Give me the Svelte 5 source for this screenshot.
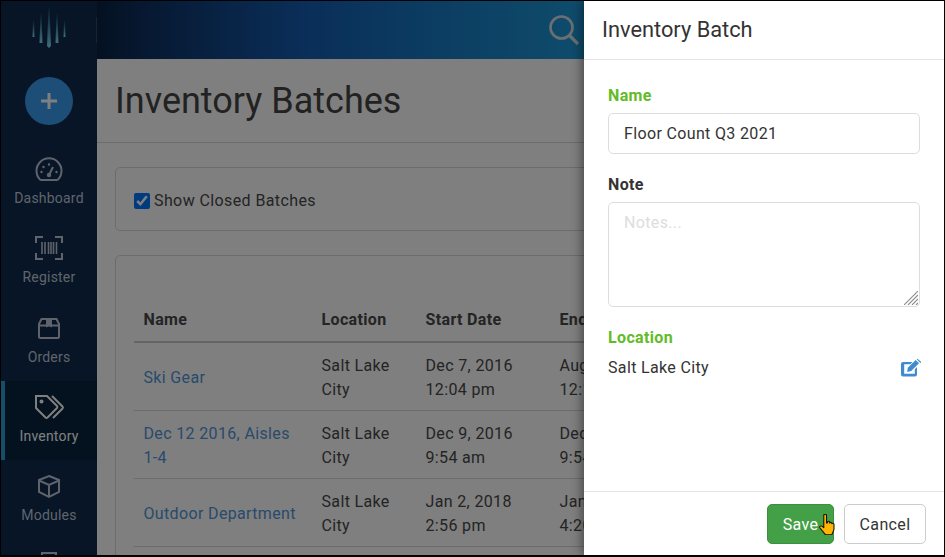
<script>
  // Sidebar entries, icon is picked by key in the markup below
  const navItems = [
    { key: 'dashboard', label: 'Dashboard' },
    { key: 'register', label: 'Register' },
    { key: 'orders', label: 'Orders' },
    { key: 'inventory', label: 'Inventory', active: true },
    { key: 'modules', label: 'Modules' },
    { key: 'more', label: '' }
  ];

  const batches = [
    { name: 'Ski Gear', location: 'Salt Lake City', start: ['Dec 7, 2016', '12:04 pm'], end: ['Aug 3, 2017', '12:10 pm'] },
    { name: 'Dec 12 2016, Aisles 1-4', location: 'Salt Lake City', start: ['Dec 9, 2016', '9:54 am'], end: ['Dec 9, 2016', '9:54 am'] },
    { name: 'Outdoor Department', location: 'Salt Lake City', start: ['Jan 2, 2018', '2:56 pm'], end: ['Jan 3, 2018', '4:20 pm'] }
  ];

  let batchName = 'Floor Count Q3 2021';
  let showClosed = true;
</script>

<div class="screen">
  <div class="shell">
    <aside class="sidebar">
      <div class="logo">
        <svg viewBox="0 0 34 42" width="34" height="42">
          <defs>
            <linearGradient id="bar" x1="0" y1="0" x2="0" y2="1">
              <stop offset="0" stop-color="#0f3d66" />
              <stop offset="1" stop-color="#7fdcf4" />
            </linearGradient>
          </defs>
          <path d="M1 14 L2 14 L2.500 30 L0.500 30 Z" fill="url(#bar)" />
          <path d="M8.500 7 L9.500 7 L10.500 36 L7.500 36 Z" fill="url(#bar)" />
          <path d="M16.500 0 L17.500 0 L19 39 L17 41 L15 39 Z" fill="url(#bar)" />
          <path d="M24.500 7 L25.500 7 L26.500 36 L23.500 36 Z" fill="url(#bar)" />
          <path d="M32 14 L33 14 L33.500 30 L31.500 30 Z" fill="url(#bar)" />
        </svg>
      </div>
      <div class="add-wrap">
        <button class="add" aria-label="Add">
          <svg viewBox="0 0 18 18" width="18" height="18">
            <path d="M9 1v16M1 9h16" stroke="currentColor" stroke-width="3" fill="none" />
          </svg>
        </button>
      </div>
      <nav>
        {#each navItems as item}
          <div class="nav-item" class:active={item.active}>
            <svg class="nav-icon" viewBox="0 0 32 28" width="32" height="28" fill="none" stroke="currentColor" stroke-width="2">
              {#if item.key === 'dashboard'}
                <path d="M7 24.500 a12.500 12.500 0 1 1 18 0 a2 2 0 0 1 -1.200 .5 H8.200 a2 2 0 0 1 -1.200 -.5 Z" />
                <circle cx="16" cy="20" r="2.200" fill="currentColor" stroke="none" />
                <path d="M16 20 L20 12" />
                <path d="M16 9.500v.1M10.500 12v.1M8.500 17v.1M23.500 17v.1" stroke-width="2.400" stroke-linecap="round" />
              {:else if item.key === 'register'}
                <path d="M3 9V3h7M22 3h7v6M29 19v6h-7M10 25H3v-6" />
                <path d="M9 8v12M12 8v12M15.500 8v12M18 8v12M20.500 8v12M23.500 8v12" stroke-width="1.600" />
              {:else if item.key === 'orders'}
                <path d="M8.500 5h15l2.500 5v12.500a1.500 1.500 0 0 1 -1.500 1.500h-17A1.500 1.500 0 0 1 6 22.500V10Z" />
                <path d="M6 11.500h20" />
                <path d="M13 5h6v8.500l-3-1.500-3 1.500Z" fill="currentColor" stroke="none" />
              {:else if item.key === 'inventory'}
                <path d="M3 3h11l10 10a1.500 1.500 0 0 1 0 2L14.500 24.500a1.500 1.500 0 0 1 -2 0L3 15Z" />
                <path d="M19 3l10.500 10.500a1.500 1.500 0 0 1 0 2L20 25" />
                <circle cx="8.500" cy="8.500" r="2" fill="currentColor" stroke="none" />
              {:else if item.key === 'modules'}
                <path d="M16 4 L26 8 V20 L16 25 L6 20 V8 Z" />
                <path d="M6 8.500 L16 13 L26 8.500 M16 13 V25" />
              {:else}
                <path d="M9 2h14v8H9Z" />
              {/if}
            </svg>
            {#if item.label}<span>{item.label}</span>{/if}
          </div>
        {/each}
      </nav>
    </aside>

    <div class="main">
      <header class="topbar">
        <svg viewBox="0 0 30 30" width="30" height="30" fill="none" stroke="currentColor" stroke-width="2.600">
          <circle cx="12.500" cy="12.500" r="11" />
          <path d="M20.500 20.500 L29 29" stroke-width="3.200" />
        </svg>
      </header>
      <div class="title-bar">
        <h1>Inventory Batches</h1>
      </div>
      <div class="content">
        <div class="card filter">
          <label>
            <input type="checkbox" bind:checked={showClosed} />
            <span>Show Closed Batches</span>
          </label>
        </div>
        <div class="card list">
          <table>
            <colgroup>
              <col class="col-name" />
              <col class="col-location" />
              <col class="col-date" />
              <col class="col-date" />
            </colgroup>
            <thead>
              <tr>
                <th>Name</th>
                <th>Location</th>
                <th>Start Date</th>
                <th>End Date</th>
              </tr>
            </thead>
            <tbody>
              {#each batches as batch}
                <tr>
                  <td><span class="link">{batch.name}</span></td>
                  <td>{batch.location}</td>
                  <td>{batch.start[0]}<br />{batch.start[1]}</td>
                  <td>{batch.end[0]}<br />{batch.end[1]}</td>
                </tr>
              {/each}
            </tbody>
          </table>
        </div>
      </div>
    </div>

    <div class="dim"></div>

    <section class="drawer">
      <div class="drawer-head">Inventory Batch</div>
      <div class="drawer-body">
        <div class="field-label green">Name</div>
        <input class="text-input" type="text" bind:value={batchName} />
        <div class="field-label note">Note</div>
        <div class="area-wrap">
          <textarea class="text-area" placeholder="Notes..."></textarea>
          <svg class="grip" viewBox="0 0 14 14" width="14" height="14" stroke="#8c8c8c" stroke-width="1.100">
            <path d="M0 14 L14 0 M4 14 L14 4 M8 14 L14 8 M12 14 L14 12" />
          </svg>
        </div>
        <div class="field-label green location">Location</div>
        <div class="location-row">
          <span>Salt Lake City</span>
          <svg viewBox="0 0 20 18" width="20" height="18" fill="#3f8bd0">
            <path d="M2 3h9.500l-2.200 2.200H3.200v9.600h10.600v-4.500l2.200-2.200v7.400a2 2 0 0 1 -2 2H2a2 2 0 0 1 -2-2V5a2 2 0 0 1 2-2Z" />
            <path d="M6.800 8.700 L14.700 1 L18 4.300 L10.200 12.100 L6.200 13 Z" />
            <path d="M15.700 0.300 a1 1 0 0 1 1.400 0 L19.700 2.600 a1 1 0 0 1 0 1.400 L18.800 3.500 Z" />
          </svg>
        </div>
      </div>
      <div class="drawer-foot">
        <button class="btn save">Save</button>
        <button class="btn cancel">Cancel</button>
      </div>
      <svg class="cursor" viewBox="0 0 16 24" width="17" height="22" preserveAspectRatio="none">
        <path d="M4.500 1.500 a1.300 1.300 0 0 1 2.600 0 V10 l1-.3 V8.500 a1.200 1.200 0 0 1 2 0 V10 a1.100 1.100 0 0 1 2 0 v.6 a1.100 1.100 0 0 1 2 .4 V17 l-2 5.500 H6 L.8 15 a1.400 1.400 0 0 1 2-1.800 L4.500 15 Z" fill="#ffb400" stroke="#111" stroke-width="1" stroke-linejoin="round" />
      </svg>
    </section>
  </div>
</div>

<style>
  :global(body) {
    margin: 0;
    background: #000;
  }

  .screen {
    width: 945px;
    height: 557px;
    box-sizing: border-box;
    padding: 1px 1px 2px 1px;
    background: #000;
    font-family: Roboto, Arial, sans-serif;
    font-size: 16px;
    line-height: 24px;
    letter-spacing: 0.35px;
    color: #484848;
  }

  .shell {
    position: relative;
    display: flex;
    height: 100%;
    overflow: hidden;
    background: #fff;
  }

  /* sidebar */
  .sidebar {
    flex: 0 0 96px;
    background: #0e2a4c;
    color: #bfc8d8;
    font-size: 14px;
    line-height: 20px;
    letter-spacing: 0.2px;
  }

  .logo {
    position: relative;
    height: 58px;
    display: flex;
    justify-content: center;
    padding-top: 6px;
    box-sizing: border-box;
  }

  /* faint divider next to the logo */
  .logo::after {
    content: '';
    position: absolute;
    right: 0;
    top: 16px;
    height: 26px;
    width: 1px;
    background: #2c4a66;
  }

  .add-wrap {
    display: flex;
    justify-content: center;
    padding: 18px 0 18px;
  }

  .add {
    width: 48px;
    height: 48px;
    padding: 0;
    border: none;
    border-radius: 50%;
    background: #3b9dee;
    color: #fff;
    display: flex;
    align-items: center;
    justify-content: center;
  }

  .nav-item {
    height: 79.300px;
    box-sizing: border-box;
    padding-top: 12px;
    display: flex;
    flex-direction: column;
    align-items: center;
    gap: 5px;
  }

  .nav-item.active {
    background: #08223e;
    color: #fff;
    border-left: 4px solid #2f9fd0;
    padding-right: 4px;
  }

  .nav-icon {
    display: block;
  }

  /* main column */
  .main {
    flex: 1;
    min-width: 0;
    background: #fff;
  }

  .topbar {
    height: 58px;
    background: linear-gradient(90deg, #0a2244 0%, #0e3264 6%, #145cb0 24%, #187ec6 42%, #1e98d8 57%);
    color: #d8dee4;
    display: flex;
    align-items: center;
    padding-left: 452px;
    box-sizing: border-box;
  }

  .title-bar {
    height: 83px;
    border-bottom: 1px solid #d8d8d8;
    display: flex;
    align-items: center;
    padding-left: 18px;
  }

  h1 {
    margin: 0;
    font-size: 36px;
    font-weight: 400;
    line-height: 44px;
    letter-spacing: 0;
    color: #444;
  }

  .content {
    padding: 24px 0 0 18px;
    width: 900px;
  }

  .card {
    border: 1px solid #d8d8d8;
    border-radius: 5px;
  }

  .filter {
    box-sizing: border-box;
    height: 64px;
    display: flex;
    align-items: center;
    padding: 4px 0 0 18px;
    margin-bottom: 24px;
    letter-spacing: 0.4px;
  }

  .filter label {
    display: flex;
    align-items: center;
    gap: 4px;
  }

  .filter input {
    width: 16px;
    height: 16px;
    margin: 0;
  }

  .list {
    padding: 46px 18px 0;
    height: 300px;
  }

  table {
    border-collapse: collapse;
    table-layout: fixed;
    width: 550px;
  }

  .col-name {
    width: 178px;
  }

  .col-location {
    width: 104px;
  }

  .col-date {
    width: 134px;
  }

  th {
    text-align: left;
    font-weight: 700;
    padding: 6px 9px 9px 9.500px;
    border-bottom: 2px solid #c8c8c8;
    white-space: nowrap;
  }

  td {
    padding: 11px 9px 8px 9.500px;
    border-bottom: 1px solid #d8d8d8;
  }

  .link {
    color: #5095d8;
  }

  .dim {
    position: absolute;
    inset: 0;
    background: rgba(0, 0, 0, 0.5);
  }

  /* drawer */
  .drawer {
    position: absolute;
    top: 0;
    right: 0;
    bottom: 0;
    width: 360px;
    display: flex;
    flex-direction: column;
    background: #fff;
    box-shadow: -2px 0 10px rgba(0, 0, 0, 0.45);
    color: #333;
  }

  .drawer-head {
    height: 58px;
    border-bottom: 1px solid #e5e5e5;
    display: flex;
    align-items: center;
    padding-left: 18px;
    font-size: 21.800px;
    letter-spacing: 0;
  }

  .drawer-body {
    flex: 1;
    padding: 25px 24px 0;
  }

  .field-label {
    font-weight: 700;
    line-height: 22px;
  }

  .green {
    color: #62bb27;
  }

  .text-input,
  .text-area {
    display: block;
    width: 100%;
    box-sizing: border-box;
    border: 1px solid #ddd;
    border-radius: 5px;
    padding: 0 15px;
    margin-top: 6px;
    font-family: inherit;
    font-size: 16px;
    line-height: 24px;
    letter-spacing: inherit;
    color: #333;
    outline: none;
  }

  .text-input {
    height: 41px;
  }

  .note {
    margin-top: 20px;
  }

  .area-wrap {
    position: relative;
  }

  .text-area {
    height: 105px;
    padding-top: 8px;
    resize: none;
  }

  .text-area::placeholder {
    color: #ddd;
    opacity: 1;
  }

  /* hatch drawn over the textarea's corner */
  .grip {
    position: absolute;
    right: 2px;
    bottom: 2px;
  }

  .location {
    margin-top: 20px;
  }

  .location-row {
    display: flex;
    justify-content: space-between;
    align-items: center;
    margin-top: 7px;
    margin-right: -1px;
    height: 24px;
  }

  .drawer-foot {
    height: 64px;
    box-sizing: border-box;
    border-top: 1px solid #e5e5e5;
    display: flex;
    justify-content: flex-end;
    align-items: flex-start;
    gap: 10px;
    padding: 12px 18px 0 0;
  }

  .btn {
    height: 40px;
    border-radius: 5px;
    font-family: inherit;
    font-size: 16px;
    letter-spacing: inherit;
    padding: 0;
  }

  .save {
    width: 67px;
    background: #43a047;
    border: 1px solid #3b8f3f;
    color: #fff;
  }

  .cancel {
    width: 82px;
    background: #fff;
    border: 1px solid #ccc;
    color: #333;
  }

  .cursor {
    position: absolute;
    left: 235px;
    bottom: 19px;
  }
</style>
